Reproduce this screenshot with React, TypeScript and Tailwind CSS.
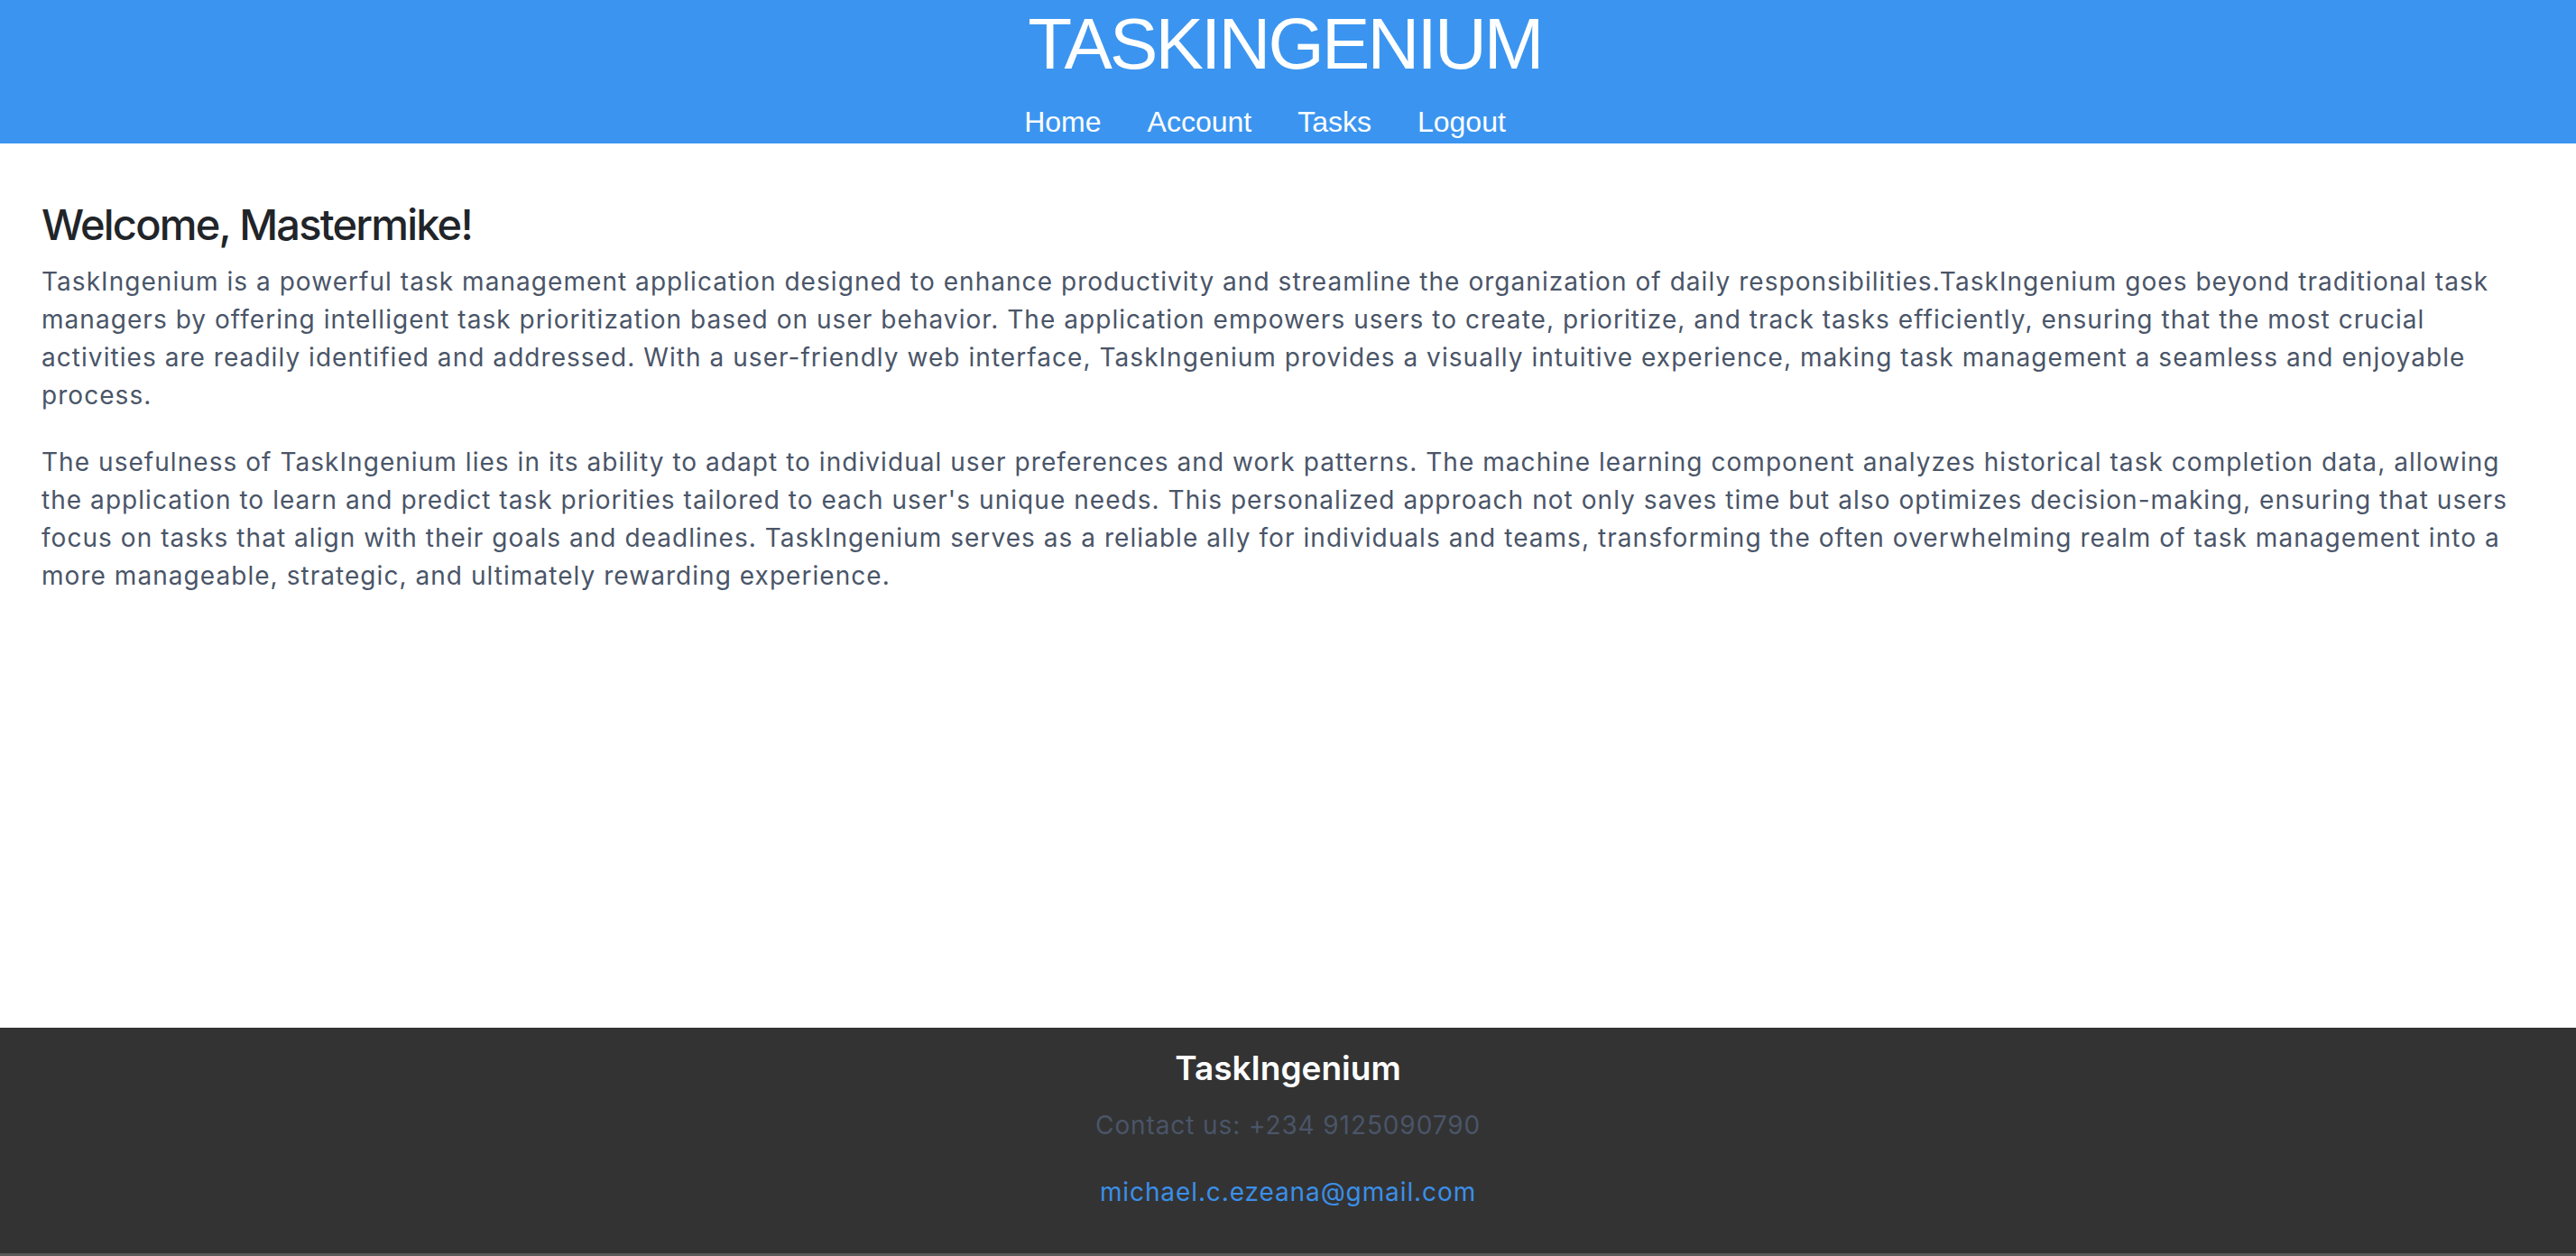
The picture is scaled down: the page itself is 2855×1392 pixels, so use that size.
import React from 'react'

const links = ['Home', 'Account', 'Tasks', 'Logout']

export default function App() {
  return (
    <div className="flex h-screen flex-col bg-white font-['Inter','Noto_Sans',sans-serif] text-[#4a5568]">
      <header className="flex h-[159px] flex-col items-center bg-[#3b95f0] font-['Liberation_Sans',Arial,sans-serif] text-white">
        <h1 className="m-0 pt-px pr-[7px] text-[80px] leading-[96px] tracking-[-2.8px]">TASKINGENIUM</h1>
        <nav className="mt-[15px]">
          <ul className="flex text-[32px] leading-[47px]">
            {links.map((l) => (
              <li key={l} className="mr-[51px]">
                <a href="#">{l}</a>
              </li>
            ))}
          </ul>
        </nav>
      </header>

      <main className="flex-1 px-[46px] pt-[62px]">
        <h2 className="mb-[14px] text-[47px] leading-[1.2] font-medium tracking-[-1.8px] text-[#212529]">
          Welcome, Mastermike!
        </h2>
        <p className="mb-[32px] text-[28px] leading-[42px] tracking-[1.05px]">
          TaskIngenium is a powerful task management application designed to enhance productivity and streamline the
          organization of daily responsibilities.TaskIngenium goes beyond traditional task
          <br />
          managers by offering intelligent task prioritization based on user behavior. The application empowers users to
          create, prioritize, and track tasks efficiently, ensuring that the most crucial
          <br />
          activities are readily identified and addressed. With a user-friendly web interface, TaskIngenium provides a
          visually intuitive experience, making task management a seamless and enjoyable
          <br />
          process.
        </p>
        <p className="mb-[32px] text-[28px] leading-[42px] tracking-[1.05px]">
          The usefulness of TaskIngenium lies in its ability to adapt to individual user preferences and work patterns.
          The machine learning component analyzes historical task completion data, allowing
          <br />
          the application to learn and predict task priorities tailored to each user's unique needs. This personalized
          approach not only saves time but also optimizes decision-making, ensuring that users
          <br />
          focus on tasks that align with their goals and deadlines. TaskIngenium serves as a reliable ally for
          individuals and teams, transforming the often overwhelming realm of task management into a
          <br />
          more manageable, strategic, and ultimately rewarding experience.
        </p>
      </main>

      <footer className="flex h-[253px] flex-col items-center border-b-[3px] border-[#5a5a5a] bg-[#333333] pt-[23px] text-center">
        <h3 className="mb-[20px] text-[37px] leading-[1.2] font-semibold text-white">TaskIngenium</h3>
        <p className="mb-[32px] text-[28px] leading-[42px] tracking-[0.9px]">Contact us: +234 9125090790</p>
        <p className="text-[28px] leading-[42px] tracking-[0.9px]">
          <a href="#" className="text-[#3b8fe8]">
            michael.c.ezeana@gmail.com
          </a>
        </p>
      </footer>
    </div>
  )
}
